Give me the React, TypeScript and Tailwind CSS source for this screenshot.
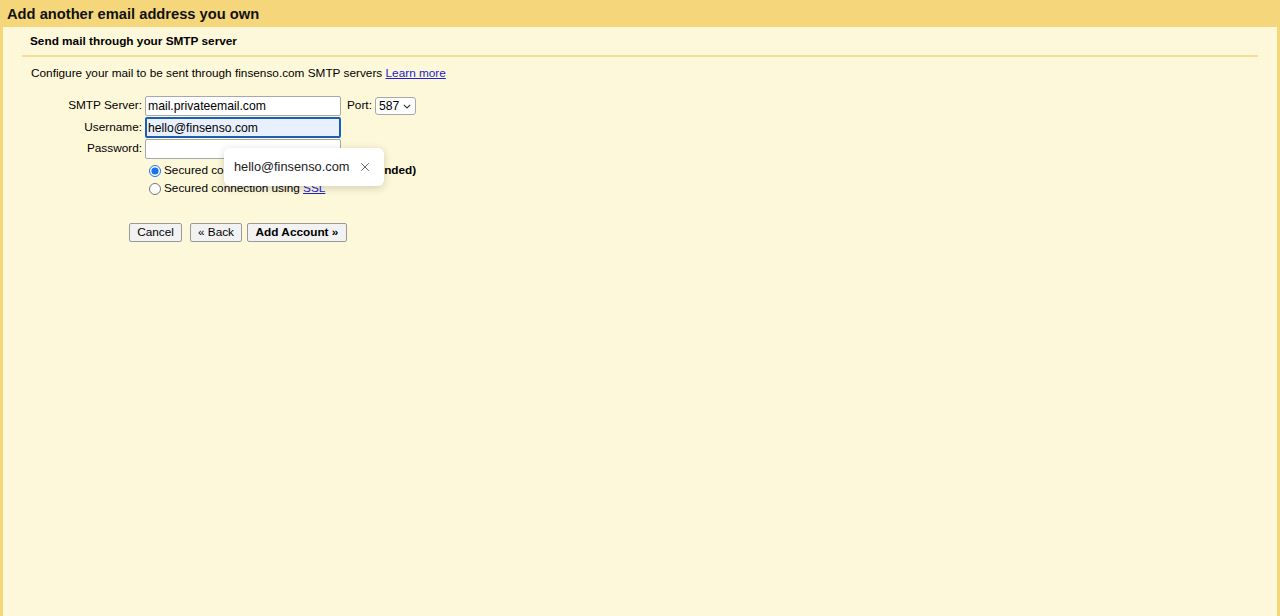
import { X } from 'lucide-react'

export default function App() {
  return (
    <div className="h-[616px] w-[1280px] bg-[#f5d67b] font-['Liberation_Sans',Arial,sans-serif] text-[11.8px] text-black">
      {/* Title bar */}
      <div className="h-[27px] pl-[7px] pt-[6px] text-[14.7px] font-bold leading-[17px] text-[#111]">
        Add another email address you own
      </div>

      <div className="mx-[3px] h-[589px] bg-[#fef8da]">
        {/* Section header */}
        <div className="pl-[27px] pt-[7px] text-[11.8px] font-bold leading-[14px]">
          Send mail through your SMTP server
        </div>
        <div className="mx-[19px] mt-[7px] h-[2px] bg-[#f3df93]" />

        <p className="pl-[28px] pt-[9px] leading-[14px]">
          Configure your mail to be sent through finsenso.com SMTP servers{' '}
          <a href="#" className="text-[#2222cc] underline">Learn more</a>
        </p>

        {/* Form */}
        <div className="relative mt-[16px] flex flex-col">
          <div className="flex items-center">
            <span className="w-[139px] text-right">SMTP Server:</span>
            <input
              readOnly
              value="mail.privateemail.com"
              className="ml-[3px] h-[20px] w-[196px] rounded-[2px] border border-[#a8a8a8] bg-white px-[2px] text-[12.2px] outline-none"
            />
            <span className="ml-[6px]">Port:</span>
            <div className="ml-[3px] flex h-[18px] w-[41px] items-center justify-between rounded-[3px] border border-[#a8a8a8] bg-white pl-[3px] pr-[4px] text-[12.2px]">
              <span>587</span>
              <svg width="8" height="5" viewBox="0 0 8 5" fill="none" stroke="#333" strokeWidth="1.1">
                <path d="M0.8 0.8l3.2 3.2L7.2 0.8" />
              </svg>
            </div>
          </div>

          <div className="mt-[1px] flex items-center">
            <span className="w-[139px] text-right">Username:</span>
            <input
              readOnly
              value="hello@finsenso.com"
              className="ml-[3px] h-[21px] w-[196px] rounded-[2px] border-2 border-[#1a5fb4] bg-[#e8f0fe] px-[1px] text-[12.2px] outline-none"
            />
          </div>

          <div className="mt-[1px] flex items-center">
            <span className="w-[139px] text-right">Password:</span>
            <input
              readOnly
              type="password"
              className="ml-[3px] h-[20px] w-[196px] rounded-[2px] border border-[#a8a8a8] bg-white px-[2px] outline-none"
            />
          </div>

          <label className="mt-[5px] flex h-[14px] items-center pl-[146px]">
            <input type="radio" name="sec" defaultChecked className="m-0 h-[12px] w-[12px] accent-[#1a73e8]" />
            <span className="ml-[3px]">
              Secured connection using <a href="#" className="text-[#2222cc] underline">TLS</a>{' '}
              <b>(recommended)</b>
            </span>
          </label>
          <label className="mt-[4px] flex h-[14px] items-center pl-[146px]">
            <input type="radio" name="sec" className="m-0 h-[12px] w-[12px]" />
            <span className="ml-[3px]">
              Secured connection using <a href="#" className="text-[#2222cc] underline">SSL</a>
            </span>
          </label>

          <div className="mt-[27px] flex items-center pl-[126px]">
            <button className="h-[19px] w-[53px] rounded-[2px] border border-[#999] bg-[#f2f2f2] text-[11.8px] leading-[17px]">
              Cancel
            </button>
            <button className="ml-[8px] h-[19px] w-[52px] rounded-[2px] border border-[#999] bg-[#f2f2f2] text-[11.8px] leading-[17px]">
              « Back
            </button>
            <button className="ml-[5px] h-[19px] w-[100px] rounded-[2px] border border-[#999] bg-[#f2f2f2] text-[11.8px] font-bold leading-[17px]">
              Add Account »
            </button>
          </div>

          {/* Autofill popup */}
          <div className="absolute left-[221px] top-[52px] flex h-[38px] w-[160px] items-center justify-between rounded-[6px] bg-white pl-[10px] pr-[12px] shadow-[0_2px_8px_rgba(0,0,0,0.18)]">
            <span className="text-[12.8px] text-[#222]">hello@finsenso.com</span>
            <X size={14} strokeWidth={1.4} className="text-[#444]" />
          </div>
        </div>
      </div>
    </div>
  )
}
